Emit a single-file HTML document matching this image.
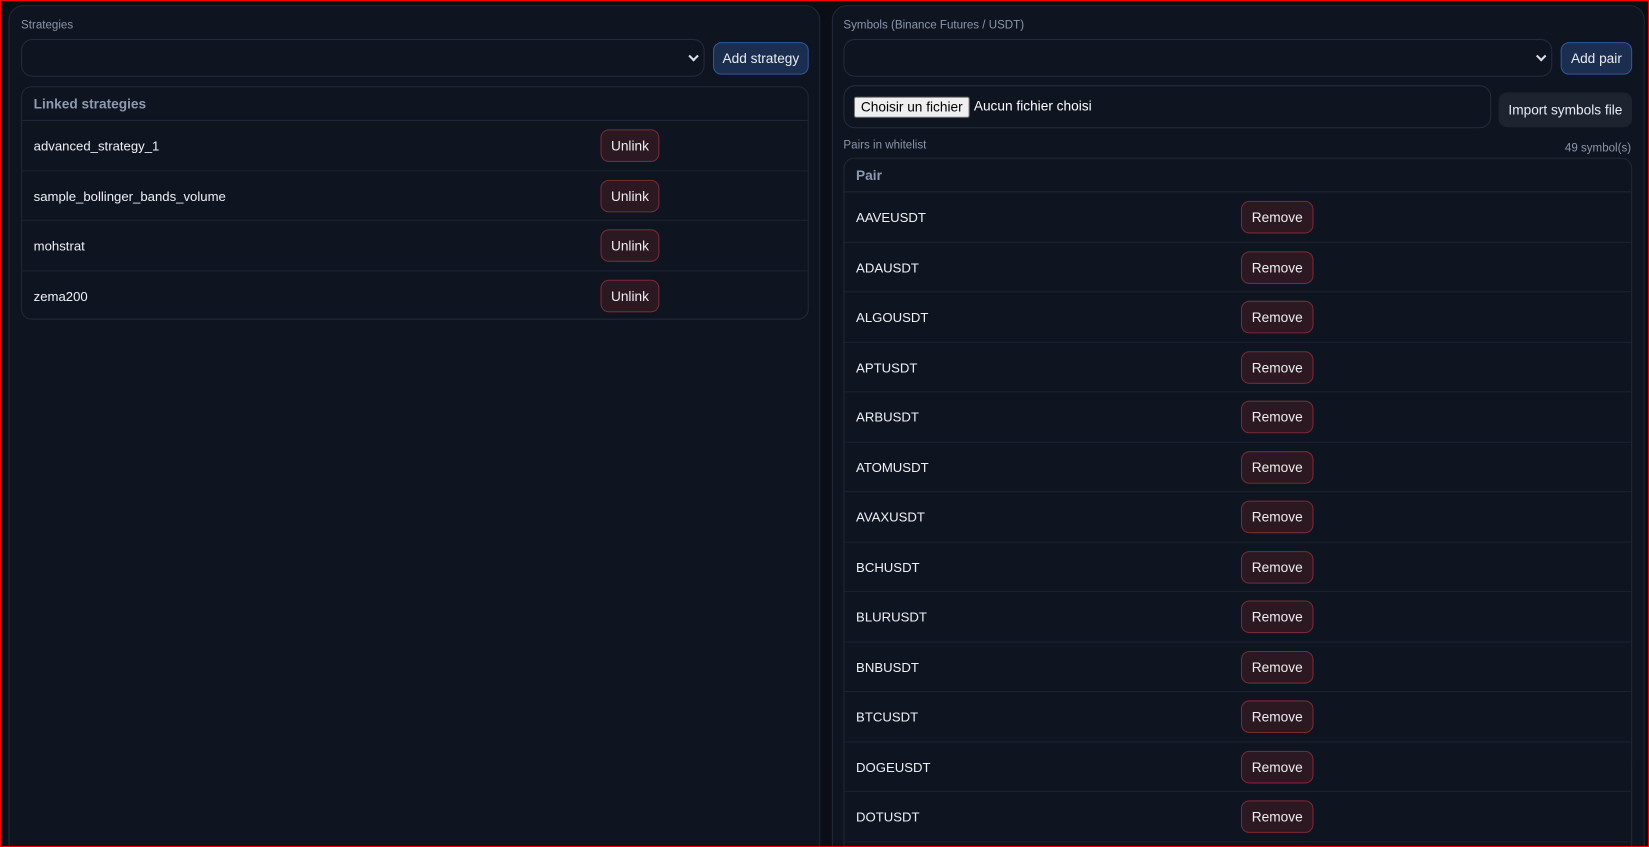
<!DOCTYPE html>
<html><head><style>
*{box-sizing:border-box;margin:0;padding:0}
html,body{width:1649px;height:847px;overflow:hidden;background:#0b0e16;font-family:"Liberation Sans",sans-serif;color:#e6e9ef}
.wrap{position:absolute;left:0;top:0;width:1649px;height:847px;overflow:hidden}
.sc{position:absolute;left:0;top:0;width:1568px;height:805px;overflow:hidden;transform:scale(1.05166);transform-origin:0 0}
.frame{position:absolute;left:0;top:0;width:1649px;height:847px;border:1px solid #f00;pointer-events:none;z-index:10}
.panel{position:absolute;top:5px;height:820px;background:#0f1421;border:1px solid #222837;border-radius:14px}
.lbl{position:absolute;font-size:11px;color:#8b96aa}
.sel{position:absolute;height:36px;border:1px solid #252b3a;border-radius:11px;background:#0f1421}
.sel:after{content:"";position:absolute;right:6px;top:12px;width:5px;height:5px;border-right:2px solid #dde;border-bottom:2px solid #dde;transform:rotate(45deg)}
.bbtn{position:absolute;height:31px;background:#1c2e50;border:1px solid #30579a;border-radius:8px;font-size:13px;color:#e8ecf4;display:flex;align-items:center;justify-content:center}
.box{position:absolute;border:1px solid #222837;border-radius:10px;overflow:hidden}
.hd{height:32px;border-bottom:1px solid #222837;font-size:13px;color:#8d9ab0;font-weight:bold;padding-left:11px;line-height:32px}
.row{position:relative;height:47.5px;border-bottom:1px solid #1d2230;font-size:12.5px;padding-left:11px;line-height:49px;color:#eef1f6}
.rb{position:absolute;top:8px;height:31px;background:#2b1820;border:1px solid #7a2a36;border-radius:8px;font-size:13px;color:#eee;display:flex;align-items:center;justify-content:center;line-height:1}
</style></head><body>
<div class="wrap"><div class="sc">
<div class="panel" style="left:8px;width:772px"></div>
<div class="panel" style="left:791px;width:773px"></div>

<div class="lbl" style="left:20px;top:18px">Strategies</div>
<div class="sel" style="left:20px;top:37px;width:650px"></div>
<div class="bbtn" style="left:678px;top:40px;width:91px">Add strategy</div>
<div class="box" style="left:20px;top:82px;width:749px;height:222px">
<div class="hd">Linked strategies</div>
<div class="row">advanced_strategy_1<div class="rb" style="left:550px;width:56px">Unlink</div></div>
<div class="row">sample_bollinger_bands_volume<div class="rb" style="left:550px;width:56px">Unlink</div></div>
<div class="row">mohstrat<div class="rb" style="left:550px;width:56px">Unlink</div></div>
<div class="row" style="border-bottom:none">zema200<div class="rb" style="left:550px;width:56px">Unlink</div></div>
</div>

<div class="lbl" style="left:802px;top:18px">Symbols (Binance Futures / USDT)</div>
<div class="sel" style="left:802px;top:37px;width:674px"></div>
<div class="bbtn" style="left:1484px;top:40px;width:68px">Add pair</div>
<div style="position:absolute;left:802px;top:81px;width:616px;height:41px;border:1px solid #252b3a;border-radius:11px"></div>
<div style="position:absolute;left:812px;top:92px;width:110px;height:20px;background:#efefef;border:1px solid #767676;border-radius:2px;color:#000;font-size:13px;text-align:center;line-height:18px">Choisir un fichier</div>
<div style="position:absolute;left:926px;top:93px;font-size:13px;color:#fff">Aucun fichier choisi</div>
<div class="bbtn" style="left:1425px;top:88px;width:127px;height:33px;background:#1e2330;border-color:#1e2330">Import symbols file</div>
<div class="lbl" style="left:802px;top:132px">Pairs in whitelist</div>
<div class="lbl" style="left:1470px;top:135px;width:81px;text-align:right">49 symbol(s)</div>
<div class="box" style="left:802px;top:150px;width:750px;height:700px">
<div class="hd">Pair</div>
<div class="row">AAVEUSDT<div class="rb" style="left:377px;width:69px">Remove</div></div>
<div class="row">ADAUSDT<div class="rb" style="left:377px;width:69px">Remove</div></div>
<div class="row">ALGOUSDT<div class="rb" style="left:377px;width:69px">Remove</div></div>
<div class="row">APTUSDT<div class="rb" style="left:377px;width:69px">Remove</div></div>
<div class="row">ARBUSDT<div class="rb" style="left:377px;width:69px">Remove</div></div>
<div class="row">ATOMUSDT<div class="rb" style="left:377px;width:69px">Remove</div></div>
<div class="row">AVAXUSDT<div class="rb" style="left:377px;width:69px">Remove</div></div>
<div class="row">BCHUSDT<div class="rb" style="left:377px;width:69px">Remove</div></div>
<div class="row">BLURUSDT<div class="rb" style="left:377px;width:69px">Remove</div></div>
<div class="row">BNBUSDT<div class="rb" style="left:377px;width:69px">Remove</div></div>
<div class="row">BTCUSDT<div class="rb" style="left:377px;width:69px">Remove</div></div>
<div class="row">DOGEUSDT<div class="rb" style="left:377px;width:69px">Remove</div></div>
<div class="row">DOTUSDT<div class="rb" style="left:377px;width:69px">Remove</div></div>
<div class="row">ETHUSDT<div class="rb" style="left:377px;width:69px">Remove</div></div>
</div>
</div></div>
<div class="frame"></div>
</body></html>
